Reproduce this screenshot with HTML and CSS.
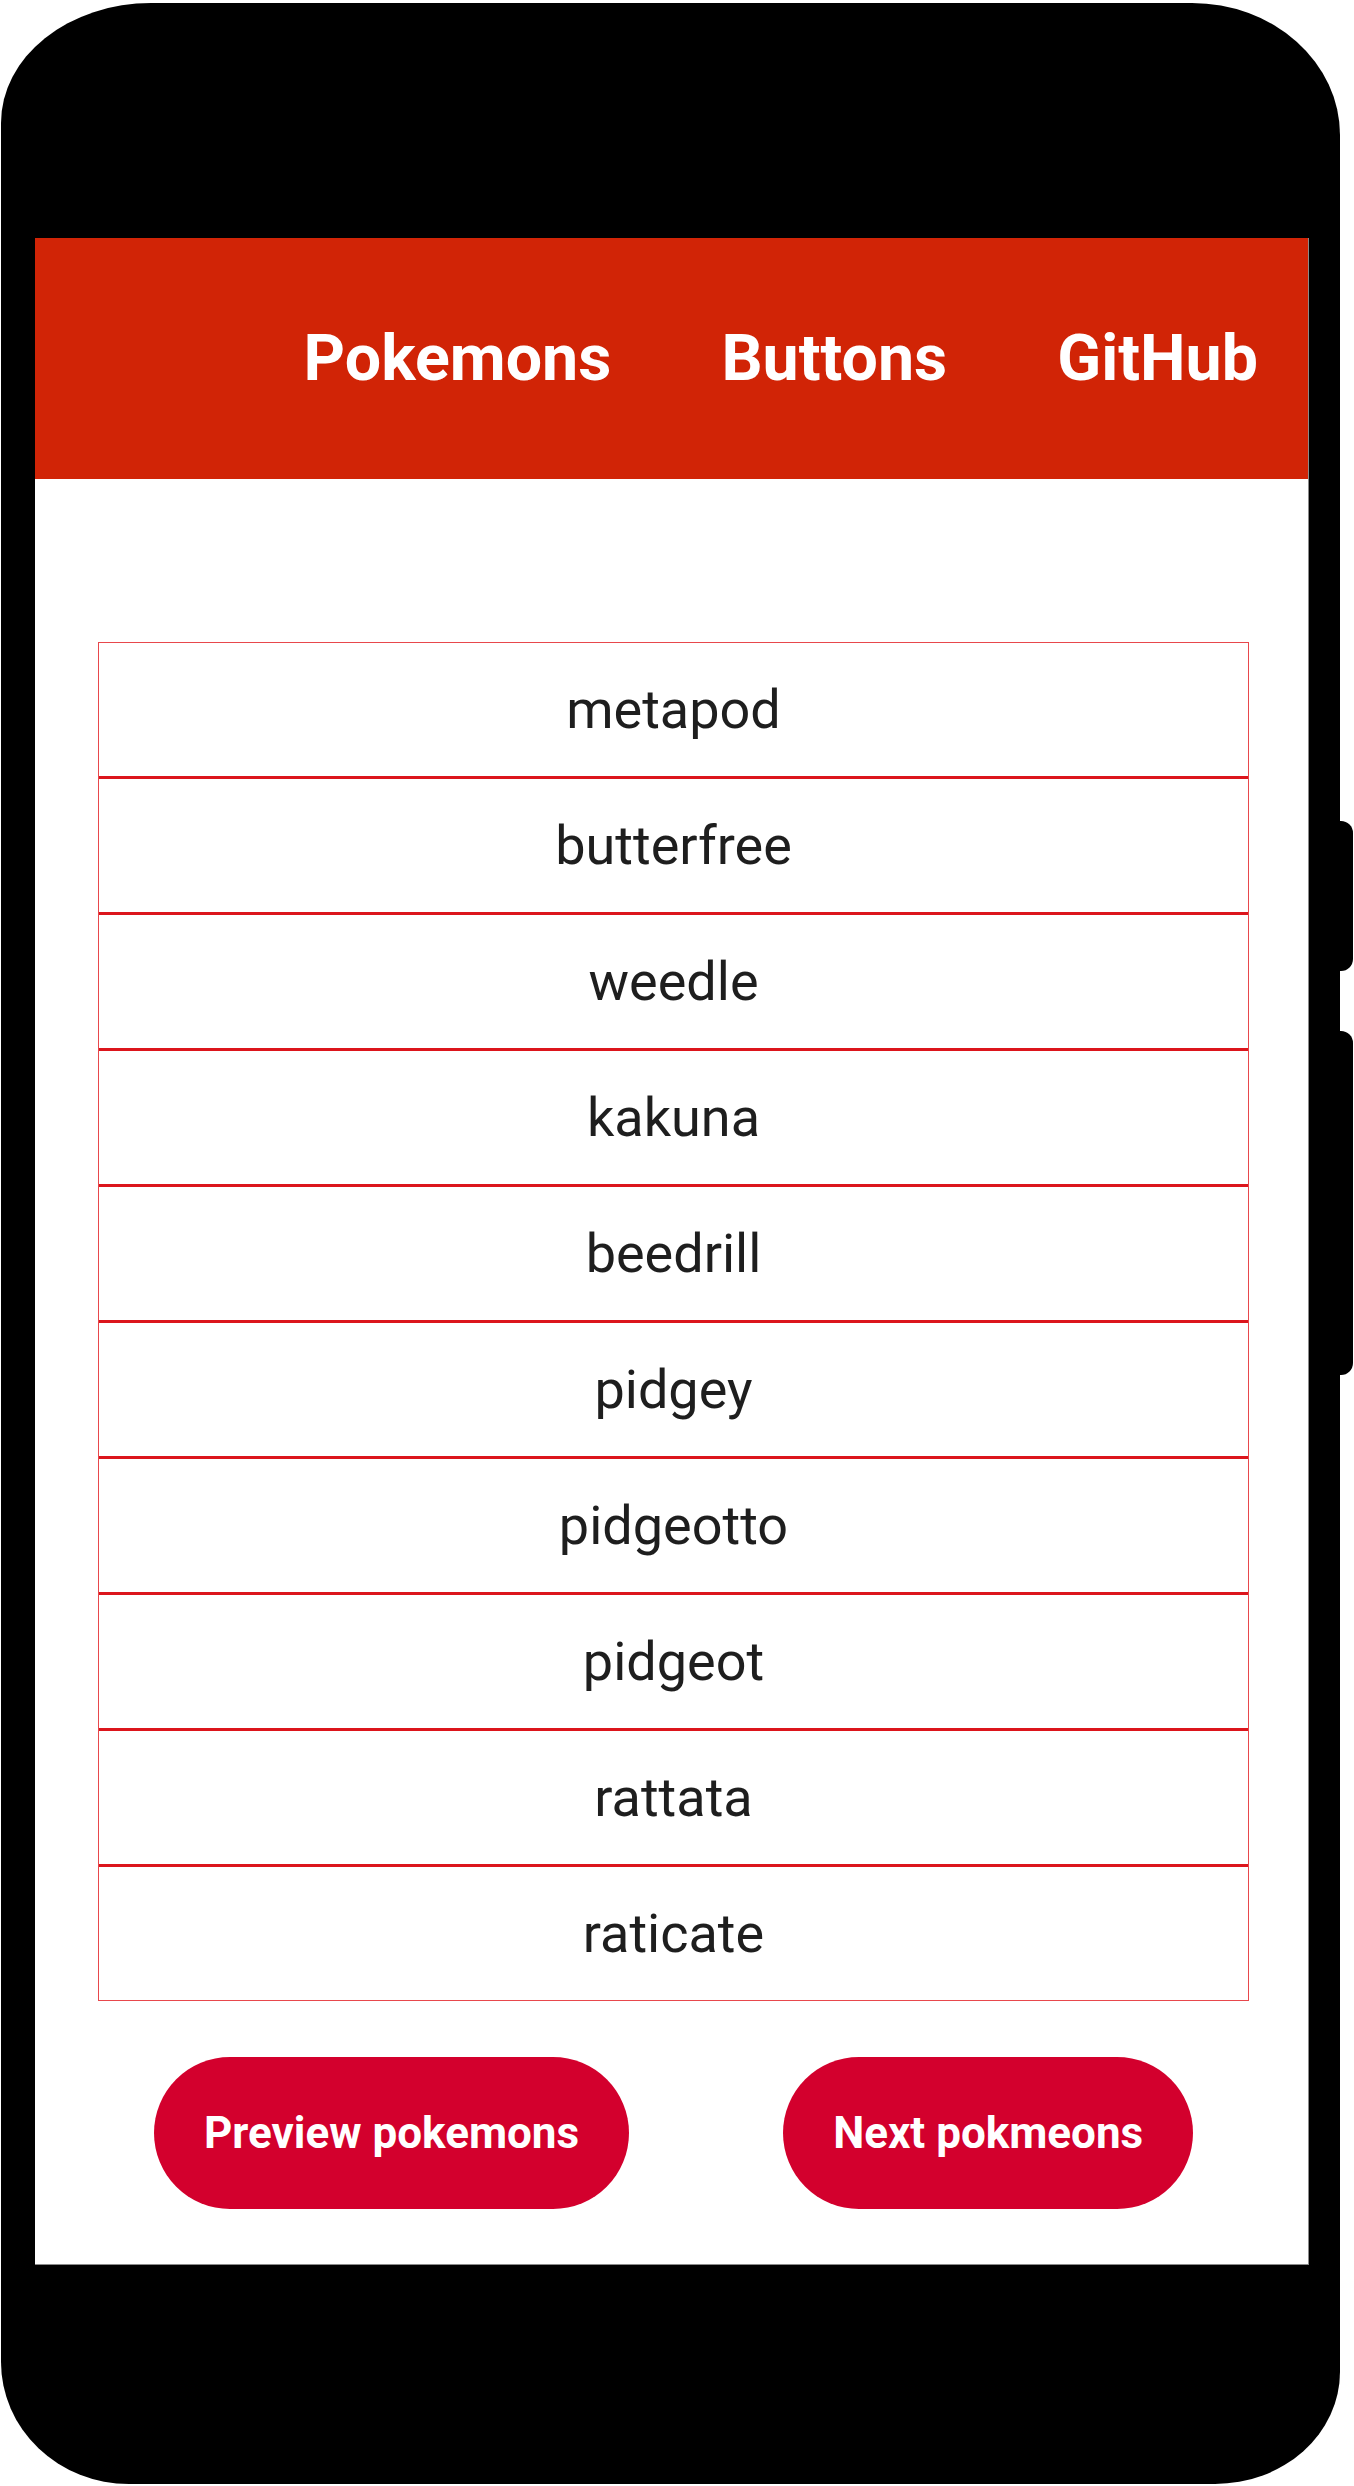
FILE: index.html
```html
<!DOCTYPE html>
<html lang="en">
<head>
<meta charset="utf-8">
<title>Pokemons</title>
<link rel="stylesheet" href="styles.css">
</head>
<body>
<div class="phone">
  <span class="side-key side-key-power"></span>
  <span class="side-key side-key-volume"></span>
  <div class="screen">
    <header class="topbar">
      <a class="nav-link" href="#">Pokemons</a>
      <a class="nav-link" href="#">Buttons</a>
      <a class="nav-link" href="#">GitHub</a>
    </header>
    <main class="content">
      <ul class="poke-list">
        <li class="poke-item">metapod</li>
        <li class="poke-item">butterfree</li>
        <li class="poke-item">weedle</li>
        <li class="poke-item">kakuna</li>
        <li class="poke-item">beedrill</li>
        <li class="poke-item">pidgey</li>
        <li class="poke-item">pidgeotto</li>
        <li class="poke-item">pidgeot</li>
        <li class="poke-item">rattata</li>
        <li class="poke-item">raticate</li>
      </ul>
      <div class="pager">
        <button class="pill" type="button">Preview pokemons</button>
        <button class="pill" type="button">Next pokmeons</button>
      </div>
    </main>
  </div>
</div>
</body>
</html>
```
FILE: styles.css
```css
* {
  box-sizing: border-box;
}

html, body {
  margin: 0;
  padding: 0;
  background: #ffffff;
}

body {
  font-family: Roboto, "Liberation Sans", Arial, sans-serif;
  width: 1354px;
  height: 2486px;
  overflow: hidden;
}

.phone {
  position: relative;
  margin: 3px 0 0 1px;
  width: 1339px;
  height: 2481px;
  background: #000000;
  border-radius: 150px 148px 125px 128px / 120px 132px 112px 122px;
  padding: 235px 31px 0 34px;
}

.side-key {
  position: absolute;
  right: -13px;
  width: 28px;
  background: #000000;
  border-radius: 12px;
}

.side-key-power {
  top: 818px;
  height: 150px;
}

.side-key-volume {
  top: 1028px;
  height: 344px;
}

.screen {
  background: #ffffff;
  height: 2027px;
  border-right: 1px solid #8a8a8a;
  border-bottom: 1px solid #8a8a8a;
}

.topbar {
  height: 241px;
  background: #d12406;
  display: flex;
  align-items: center;
  justify-content: flex-end;
  gap: 110px;
  padding-right: 50px;
}

.nav-link {
  color: #ffffff;
  text-decoration: none;
  font-weight: 700;
  font-size: 64.5px;
  line-height: 1;
}

.content {
  padding: 163px 59px 0 63px;
}

.poke-list {
  list-style: none;
  margin: 0;
  padding: 0;
  border: 1px solid #e8474c;
}

.poke-item {
  height: 133px;
  display: flex;
  align-items: center;
  justify-content: center;
  font-size: 54px;
  color: #1e1e1e;
}

.poke-item + .poke-item {
  height: 136px;
  border-top: 3px solid #dc151c;
}

.pager {
  display: flex;
  gap: 154px;
  margin-top: 56px;
  padding-left: 56px;
}

.pill {
  height: 152px;
  padding: 0 50px;
  border: none;
  border-radius: 76px;
  background: #d3002d;
  color: #ffffff;
  font-family: Roboto, "Liberation Sans", Arial, sans-serif;
  font-weight: 700;
  font-size: 44px;
  cursor: pointer;
}
```
